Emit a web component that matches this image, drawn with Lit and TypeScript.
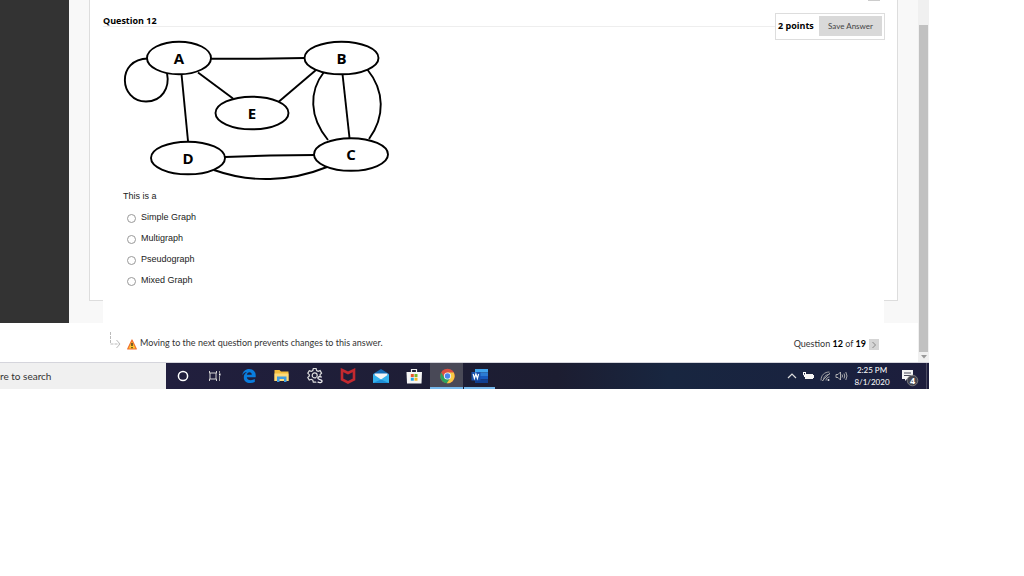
import { LitElement, html, css, svg } from "lit";
import { customElement, state } from "lit/decorators.js";

const ANSWERS = ["Simple Graph", "Multigraph", "Pseudograph", "Mixed Graph"];

const NODES = [
  { label: "A", x: 179, y: 58, rx: 32 },
  { label: "B", x: 341.5, y: 58, rx: 37 },
  { label: "E", x: 252, y: 113, rx: 36.5 },
  { label: "D", x: 188, y: 158, rx: 37 },
  { label: "C", x: 351, y: 154.5, rx: 37 },
];

const EDGES = [
  "M211 58.7H258L305 58",
  "M198 72.500L233 98.500",
  "M316 70L279 101.500",
  "M181.500 74L188 141",
  "M342.500 74L349.500 138",
  "M324 72C309 91 309 117 328 140",
  "M367 69C385 91 385 117 369 139",
  "M225 157L270 155.500L315 155",
  "M214 170C250 183 290 182 327 167",
  "M148 58.500C116 59 119 101.500 146 101.500C162 101.500 170 88 167 73",
];

@customElement("graph-figure")
export class GraphFigure extends LitElement {
  static styles = css`
    :host { display: block; }
    svg { display: block; }
    .line { fill: none; stroke: #000; stroke-width: 1.9; }
    .node { fill: #fff; stroke: #000; stroke-width: 1.9; }
    .label { font: bold 15px "Open Sans", sans-serif; text-anchor: middle; fill: #000; }
  `;
  render() {
    return html`<svg width="274" height="148" viewBox="119 36 274 148" role="img" aria-label="Graph with vertices A, B, C, D and E">
      ${EDGES.map((d) => svg`<path class="line" d=${d} />`)}
      ${NODES.map(
        (n) => svg`<ellipse class="node" cx=${n.x} cy=${n.y} rx=${n.rx} ry="16.3" />
          <text class="label" x=${n.x} y=${n.y + 5.5}>${n.label}</text>`
      )}
    </svg>`;
  }
}

const APPS = [
  { name: "Cortana", cls: "", art: svg`<circle cx="10" cy="10" r="4.600" fill="none" stroke="#fff" stroke-width="1.500"/>` },
  { name: "Task View", cls: "", art: svg`<path d="M3.500 5v2h7V5M3.500 15v-2h7v2M4 7v6M10 7v6" fill="none" stroke="#d5d5d5"/><path d="M13.500 5v2M13.500 10v5" stroke="#aaa"/><path d="M13 7.500h1.500v2H13z" fill="#fff"/>` },
  { name: "Edge", cls: "", art: svg`<path d="M3.200 9.300C3.800 5.300 6.500 3 10.200 3c4.300 0 6.500 3 6.500 6.500v1.700H7.800c.2 2 1.800 3 4 3 1.600 0 2.900-.4 4-1.100v3c-1.300.7-2.800 1-4.500 1-4 0-6.500-2.300-6.500-5.700 0-2.400 1.200-4.300 3.200-5.300C5.800 6.300 4.200 7.400 3.200 9.300zM7.900 8.700h4.900c0-1.500-.8-2.500-2.300-2.500-1.400 0-2.400 1-2.600 2.500z" fill="#0a7ddd"/>` },
  { name: "File Explorer", cls: "", art: svg`<path d="M2.500 4h5l1.500 1.500h7.500V15h-14z" fill="#f3bd3c"/><path d="M2.500 7.500h14V15h-14z" fill="#fddb7a"/><path d="M5 16v-5.500h9.500V16h-2.500v-3H7.500v3z" fill="#3f9ce0"/>` },
  { name: "Settings", cls: "", art: svg`<path d="M8.300 2.500h2.800l.5 2 1.500.8 2-.7 1.500 2.500-1.500 1.500v1.500l-4 6H8.300l-.5-2-1.500-.8-2 .7-1.500-2.500L4.300 10V8.700L2.800 7.200l1.500-2.500 2 .7 1.500-.9z" fill="none" stroke="#ddd" stroke-width="1.200"/><circle cx="9.700" cy="9.400" r="2.500" fill="none" stroke="#ddd" stroke-width="1.200"/><circle cx="14.500" cy="14" r="3.700" fill="#201e3c"/><path d="M16.800 11.300c-1.600-1-4-.7-4 .8 0 2 4.300 1 4.300 3 0 1.700-2.700 1.900-4.500.8" fill="none" stroke="#eee" stroke-width="1.300"/>` },
  { name: "McAfee", cls: "", art: svg`<path d="M4 4l6 3 6-3v9.500L10 16.500l-6-3z" fill="none" stroke="#c3292f" stroke-width="2.600"/>` },
  { name: "Mail", cls: "", art: svg`<path d="M2 8l8-5 8 5v9H2z" fill="#146bb5"/><path d="M3.500 7.500h13V12L10 15l-6.500-3z" fill="#f5f5f5"/><path d="M2 8l8 5.500L18 8v9H2z" fill="#35b2ed"/><path d="M2 17l8-3.500 8 3.500z" fill="#1d8ed7"/>` },
  { name: "Store", cls: "", art: svg`<path d="M7.500 6V3.500h5V6" fill="none" stroke="#eee" stroke-width="1.200"/><path d="M2.500 6h15.500l-.5 11.500H3z" fill="#f5f5f5"/><path d="M6.800 8h3v3h-3z" fill="#e9532c"/><path d="M10.500 8h3v3h-3z" fill="#7cb528"/><path d="M6.800 11.700h3v3h-3z" fill="#20a3e4"/><path d="M10.500 11.700h3v3h-3z" fill="#f5b71c"/>` },
  { name: "Chrome", cls: "active", art: svg`<circle cx="10.500" cy="10" r="7.300" fill="#dd4f40"/><path d="M4.200 6.400A7.300 7.300 0 0 0 10 17.300L13.600 11.800 7.400 11.800z" fill="#2ea25d"/><path d="M10.500 6.600h6.200A7.300 7.300 0 0 1 9.800 17.300l3.700-5.500z" fill="#f6c944"/><circle cx="10.500" cy="10" r="3.600" fill="#f4f4f4"/><circle cx="10.500" cy="10" r="2.700" fill="#4a85ea"/>` },
  { name: "Word", cls: "open", art: svg`<path d="M5 3h13v3.500H5z" fill="#41a5ee"/><path d="M5 6.500h13V10H5z" fill="#2b7cd3"/><path d="M5 10h13v3.500H5z" fill="#185abd"/><path d="M5 13.500h13V17H5z" fill="#103f91"/><path d="M1.500 6h9v8.500h-9z" fill="#1a51ab"/><path d="M3.200 8l1.200 4.500L5.900 8l1.500 4.500L8.600 8" fill="none" stroke="#fff" stroke-width="1.200"/>` },
];

@customElement("task-bar")
export class TaskBar extends LitElement {
  static styles = css`
    :host { display: flex; height: 26px; background: linear-gradient(90deg, #211f3e 18%, #1c1d31 60%, #182640 72%, #19223f 88%, #1d1d3c); border-top: 1px solid #d5d5dc; color: #fff; font: 9px "Open Sans", sans-serif; }
    button { border: 0; margin: 0; padding: 0; background: none; color: inherit; font: inherit; }
    .search { width: 166px; box-sizing: border-box; margin: 0; border: 0; padding: 0; background: #f0f0f0; font: 10px "Lato", sans-serif; }
    .search::placeholder { color: #333; opacity: 1; }
    .apps { display: flex; flex: 1; }
    .app { width: 33px; display: grid; place-items: center; border-bottom: 2px solid transparent; padding-top: 2px; }
    .active { background: #494957; border-color: #76b9ed; }
    .open { border-image: linear-gradient(90deg, transparent 3px, #76b9ed 3px, #76b9ed 30px, transparent 30px) 2; }
    svg { display: block; }
    .tray { display: flex; align-items: center; gap: 4px; }
    .clock { width: 40px; font: 8px/12px "Lato", sans-serif; text-align: center; }
    .notes { padding: 3px 0 0 4px; }
    .edge { width: 2px; height: 26px; border-left: 1px solid #4b4b62; }
  `;
  render() {
    return html`
      <input class="search" type="text" aria-label="Search" placeholder="re to search" />
      <div class="apps">
        ${APPS.map((a) => html`<button class="app ${a.cls}" aria-label=${a.name}><svg width="20" height="20" viewBox="0 0 20 20">${a.art}</svg></button>`)}
      </div>
      <div class="tray">
        <button aria-label="Show hidden icons"><svg width="12" height="14" viewBox="0 0 12 14"><path d="M2 9l4-4 4 4" fill="none" stroke="#ddd" stroke-width="1.200"/></svg></button>
        <button aria-label="Battery"><svg width="13" height="14" viewBox="0 0 13 14"><path d="M3 5h8v1h1v3h-1v1H3z" fill="#f4f4f4"/><path d="M1 3.500h3M1.500 3v3h2V3M2.500 6v2" fill="none" stroke="#fff"/></svg></button>
        <button aria-label="Network"><svg width="12" height="14" viewBox="0 0 12 14"><path d="M2 11.500C2 6 5.500 3 10.500 3M4.500 11.500c0-3.500 2-6 6-6M7 11.500c0-2 1.500-3.500 3.500-3.500M3 12l8-8" fill="none" stroke="#aaa" stroke-width=".9"/><circle cx="9.500" cy="11" r="1" fill="#ddd"/></svg></button>
        <button aria-label="Volume"><svg width="13" height="14" viewBox="0 0 13 14"><path d="M1 5.500h2L5.500 3v8L3 8.500H1zM7 5.500q1 1.500 0 3M9 4.500q1.500 2.500 0 5M10.800 3q2.400 4 0 8" fill="none" stroke="#bbb" stroke-width=".9"/></svg></button>
        <div class="clock">2:25 PM<br />8/1/2020</div>
        <button class="notes" aria-label="Notifications, 4 new"><svg width="22" height="18" viewBox="-1 0 22 18"><path d="M1 1h11v9H6l-2 2v-2H1z" fill="#f4f4f4"/><path d="M3 4h7M3 6.500h7" stroke="#4a4a5b"/><circle cx="11.500" cy="11.500" r="5.300" fill="#444550" stroke="#888" stroke-width=".8"/><text x="11.500" y="14.500" text-anchor="middle" font-size="9" font-weight="bold" fill="#fff">4</text></svg></button>
        <span class="edge"></span>
      </div>`;
  }
}

@customElement("app-root")
export class AppRoot extends LitElement {
  @state() private picked = "";

  static styles = css`
    :host { display: block; min-height: 100vh; background: #fff; color: #333; font: 9px/12px "Open Sans", sans-serif; }
    .screen { margin-right: 95px; }
    .window { display: grid; grid-template-columns: 1fr 11px; }
    .body { display: flex; background: #f8f8f8; }
    .nav { width: 69px; background: #333; }
    .content { flex: 1; padding: 0 20px; }
    .panel { background: #fff; border: 1px solid #ddd; border-width: 0 1px; height: 300px; padding: 0 12px 0 13px; box-sizing: border-box; }
    .stub { display: block; height: 1px; width: 12px; margin: 0 5px 0 auto; background: #ccc; }
    .under { display: grid; grid-template-columns: 14px 1fr 14px; height: 23px; }
    .corner { border-top: 1px solid #ddd; }
    .fill { background: #fff; }
    .head { display: flex; align-items: flex-start; padding-top: 12px; }
    h1 { flex: 1; margin: 0; padding-top: 2px; border-bottom: 1px solid #eee; color: #000; font-size: 9px; line-height: 11px; font-weight: bold; }
    .score { display: flex; align-items: center; justify-content: space-between; width: 110px; height: 27px; box-sizing: border-box; border: 1px solid #ddd; padding: 0 2px 2px; color: #000; font-size: 9px; font-weight: bold; }
    .save { width: 63px; height: 20px; border: 0; padding: 0; background: #d9d9d9; color: #444; font: 8px "Lato", sans-serif; }
    .question { padding: 0 0 0 20px; font: 9px/13px "Liberation Sans", sans-serif; color: #222; }
    graph-figure { margin: -4px 0 6px -4px; }
    p { margin: 0; }
    fieldset { border: 0; margin: 4px 0 0; padding: 0; }
    .answer { display: flex; align-items: flex-start; gap: 5px; height: 21px; padding: 4px 0 0 4px; box-sizing: border-box; }
    .answer input { appearance: none; width: 9px; height: 9px; margin: 3px 0 0; border: 1px solid #999; border-radius: 50%; background: #fff; }
    .answer input:checked { background: radial-gradient(#333 2px, #fff 3px); }
    .foot { display: flex; align-items: center; height: 39px; padding: 0 39px 0 109px; box-sizing: border-box; }
    .foot span { font: 9px/12px "Lato", sans-serif; }
    .foot svg { flex: none; }
    .hint { margin: 0 6px 6px 0; }
    .warn { margin: 3px 3px 0 0; }
    .foot .count { margin-left: auto; padding-top: 2px; }
    .count b { color: #000; }
    .next { width: 10px; height: 11px; margin: 4px 0 0 3px; border: 0; padding: 0; background: #d5d5d5; display: grid; place-items: center; }
    .scroll { display: flex; flex-direction: column; background: #f0f0f0; padding-top: 25px; }
    .thumb { flex: 1; margin-left: 1px; width: 9px; background: #c1c1c1; }
    .down { height: 10px; border: 0; padding: 0; background: #f0f0f0; display: grid; place-items: center; }
  `;

  render() {
    return html`<div class="screen">
      <div class="window">
        <main>
          <div class="body">
            <div class="nav"></div>
            <div class="content">
              <section class="panel">
                <span class="stub"></span>
                <div class="head">
                  <h1>Question 12</h1>
                  <div class="score"><span>2 points</span><button class="save">Save Answer</button></div>
                </div>
                <div class="question">
                  <graph-figure></graph-figure>
                  <p id="prompt">This is a</p>
                  <fieldset aria-labelledby="prompt">
                    ${ANSWERS.map((a) => html`<label class="answer"><input type="radio" name="answer" .value=${a} .checked=${this.picked === a} @change=${() => (this.picked = a)} /><span>${a}</span></label>`)}
                  </fieldset>
                </div>
              </section>
              <div class="under"><span class="corner"></span><span class="fill"></span><span class="corner"></span></div>
            </div>
          </div>
          <footer class="foot">
            <svg class="hint" width="12" height="18" viewBox="0 0 12 18"><path d="M1.500 1v12H10" fill="none" stroke="#bbb" stroke-dasharray="3 1"/><path d="M7.500 9l3.500 4-3.500 4" fill="none" stroke="#bbb"/></svg>
            <svg class="warn" width="10" height="11" viewBox="0 0 10 11"><path d="M5 1l4.300 9H.7z" fill="#ffc52e" stroke="#f0702f" stroke-width="1.200" stroke-linejoin="round"/><path d="M5 4v3M5 8v1.300" stroke="#222" stroke-width="1.200"/></svg>
            <span>Moving to the next question prevents changes to this answer.</span>
            <span class="count">Question <b>12</b> of <b>19</b></span>
            <button class="next" aria-label="Next question"><svg width="6" height="8" viewBox="0 0 6 8"><path d="M1.500 1l3 3-3 3" fill="none" stroke="#888"/></svg></button>
          </footer>
        </main>
        <div class="scroll"><span class="thumb"></span><button class="down" aria-label="Scroll down"><svg width="6" height="4" viewBox="0 0 6 4"><path d="M0 0h6L3 3.500z" fill="#999"/></svg></button></div>
      </div>
      <task-bar></task-bar>
    </div>`;
  }
}
